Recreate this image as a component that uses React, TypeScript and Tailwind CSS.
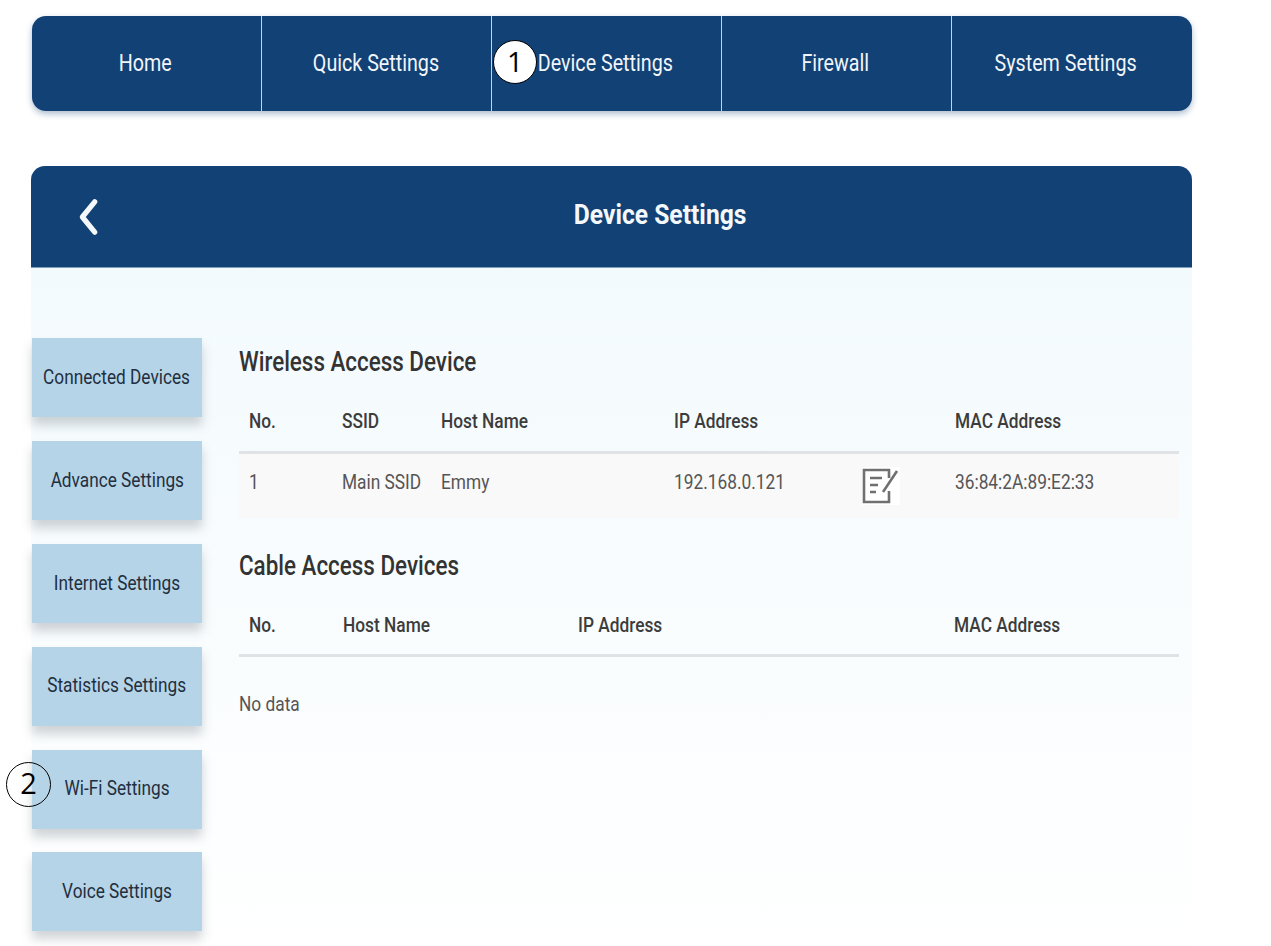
const navItems = ['Home', 'Quick Settings', 'Device Settings', 'Firewall', 'System Settings'];
const sideItems = [
  'Connected Devices',
  'Advance Settings',
  'Internet Settings',
  'Statistics Settings',
  'Wi-Fi Settings',
  'Voice Settings',
];

function EditIcon() {
  return (
    <svg viewBox="0 0 38 38" className="h-[38px] w-[38px] bg-white" fill="none" stroke="#707070" strokeWidth="2.6">
      <path d="M27 11V3H2v32h25V24" />
      <path d="M8 11h12M8 18h8M8 25h6" strokeWidth="2.4" />
      <path d="M35 4 21 25" strokeWidth="2.6" />
    </svg>
  );
}

function Th({ className, children }: { className: string; children: string }) {
  return (
    <div className={className}>
      <span className="inline-block origin-left scale-x-[0.865] whitespace-nowrap text-[20px] font-medium text-[#3c3c3c]">
        {children}
      </span>
    </div>
  );
}

function Td({ className, children }: { className: string; children: string }) {
  return (
    <div className={className}>
      <span className="inline-block origin-left scale-x-[0.865] whitespace-nowrap text-[20px] text-[#555]">
        {children}
      </span>
    </div>
  );
}

export default function App() {
  return (
    <div className="relative h-[946px] overflow-hidden bg-white pt-4 pl-[31px] pr-[79px] font-['Roboto',sans-serif]">
      <nav className="ml-px flex h-[95px] overflow-hidden rounded-[14px] bg-[#114175] shadow-[0_3px_6px_rgba(17,65,117,0.35)]">
        {navItems.map((item, i) => (
          <div
            key={item}
            className={`flex w-[230px] shrink-0 items-center justify-center pr-[2px] pb-[2px] ${i < 4 ? 'border-r border-[#c5d3e0]' : ''}`}
          >
            <span className="inline-block scale-x-[0.82] whitespace-nowrap text-[24px] text-[#f1f5f9]">{item}</span>
          </div>
        ))}
      </nav>

      <header className="relative mt-[55px] flex h-[102px] items-center justify-center rounded-t-[14px] border-b border-[#7f9fbd] bg-[#114175] pb-[4px] pl-[97px]">
        <svg viewBox="0 0 24 40" className="absolute left-[46px] top-[32px] h-[38px] w-[24px]" fill="none" stroke="#f4f8fb" strokeWidth="5.5" strokeLinecap="round" strokeLinejoin="round">
          <path d="M18 4 5 20l13 16" />
        </svg>
        <h1 className="scale-x-[0.88] whitespace-nowrap text-[28px] font-bold text-[#f4f8fb]">Device Settings</h1>
      </header>

      <main className="flex h-[700px] bg-gradient-to-b from-[#f3fafd] to-white pt-[70px]">
        <aside className="ml-px flex w-[170px] shrink-0 flex-col gap-[23.9px]">
          {sideItems.map((item) => (
            <div
              key={item}
              className="flex h-[79px] shrink-0 items-center justify-center bg-[#b6d4e7] shadow-[0_8px_10px_rgba(90,100,110,0.28)]"
            >
              <span className="inline-block scale-x-[0.82] whitespace-nowrap text-[21px] text-[#1f2f40]">{item}</span>
            </div>
          ))}
        </aside>

        <section className="ml-[37px] flex-1 pr-[13px]">
          <h2 className="mt-[6px] mb-[12px] h-[36px] origin-left scale-x-[0.8] whitespace-nowrap text-[28px] leading-[36px] font-medium text-[#333]">
            Wireless Access Device
          </h2>
          <div className="flex h-[62px] items-center border-b-[3px] border-[#dfe3e5] pb-[2px] pl-[10px]">
            <Th className="w-[93px]">No.</Th>
            <Th className="w-[99px]">SSID</Th>
            <Th className="w-[233px]">Host Name</Th>
            <Th className="w-[281px]">IP Address</Th>
            <Th className="flex-1">MAC Address</Th>
          </div>
          <div className="flex h-[64px] items-center bg-[#f9f9f9] pb-[8px] pl-[10px]">
            <Td className="w-[93px]">1</Td>
            <Td className="w-[99px]">Main SSID</Td>
            <Td className="w-[233px]">Emmy</Td>
            <Td className="w-[188px]">192.168.0.121</Td>
            <div className="mt-[8px] w-[93px]">
              <EditIcon />
            </div>
            <Td className="flex-1">36:84:2A:89:E2:33</Td>
          </div>

          <h2 className="mt-[30px] mb-[11px] h-[36px] origin-left scale-x-[0.8] whitespace-nowrap text-[28px] leading-[36px] font-medium text-[#333]">
            Cable Access Devices
          </h2>
          <div className="flex h-[62px] items-center border-b-[3px] border-[#dfe3e5] pl-[10px]">
            <Th className="w-[94px]">No.</Th>
            <Th className="w-[235px]">Host Name</Th>
            <Th className="w-[376px]">IP Address</Th>
            <Th className="flex-1">MAC Address</Th>
          </div>
          <div className="mt-[32px]">
            <span className="inline-block origin-left scale-x-[0.865] text-[20px] text-[#555]">No data</span>
          </div>
        </section>
      </main>

      <div className="absolute left-[493px] top-[40px] flex h-[44px] w-[44px] items-center justify-center rounded-full border border-black bg-white pb-[3px] text-[28px] font-['Open_Sans',sans-serif] text-black">
        1
      </div>
      <div className="absolute left-[6px] top-[762px] flex h-[45px] w-[45px] items-center justify-center rounded-full border border-black pb-[3px] text-[29px] font-['Open_Sans',sans-serif] text-black">
        2
      </div>
    </div>
  );
}
